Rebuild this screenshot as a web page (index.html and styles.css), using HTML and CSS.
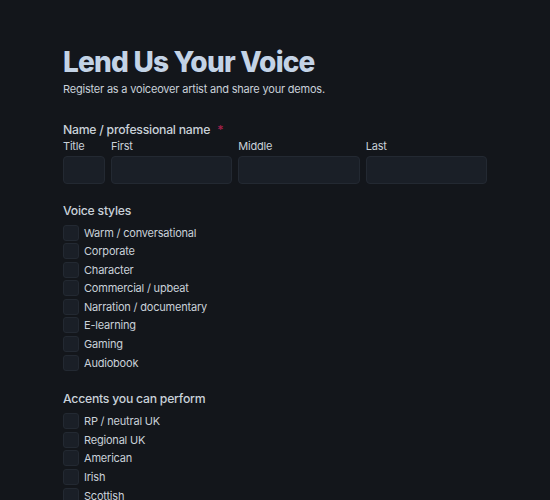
FILE: index.html
```html
<!DOCTYPE html>
<html lang="en">
<head>
<meta charset="utf-8">
<title>Lend Us Your Voice</title>
<link rel="stylesheet" href="styles.css">
</head>
<body>
<main class="page">
  <header class="head">
    <h1 class="title">Lend Us Your Voice</h1>
    <p class="subtitle">Register as a voiceover artist and share your demos.</p>
  </header>

  <section class="field">
    <div class="label">Name / professional name <span class="req">*</span></div>
    <div class="name-grid">
      <label class="sub">Title<input class="input" type="text"></label>
      <label class="sub">First<input class="input" type="text"></label>
      <label class="sub">Middle<input class="input" type="text"></label>
      <label class="sub">Last<input class="input" type="text"></label>
    </div>
  </section>

  <section class="field group">
    <div class="label">Voice styles</div>
    <div class="checks">
      <label class="check"><span class="box"></span>Warm / conversational</label>
      <label class="check"><span class="box"></span>Corporate</label>
      <label class="check"><span class="box"></span>Character</label>
      <label class="check"><span class="box"></span>Commercial / upbeat</label>
      <label class="check"><span class="box"></span>Narration / documentary</label>
      <label class="check"><span class="box"></span>E-learning</label>
      <label class="check"><span class="box"></span>Gaming</label>
      <label class="check"><span class="box"></span>Audiobook</label>
    </div>
  </section>

  <section class="field group group-2">
    <div class="label">Accents you can perform</div>
    <div class="checks checks-2">
      <label class="check"><span class="box"></span>RP / neutral UK</label>
      <label class="check"><span class="box"></span>Regional UK</label>
      <label class="check"><span class="box"></span>American</label>
      <label class="check"><span class="box"></span>Irish</label>
      <label class="check"><span class="box"></span>Scottish</label>
    </div>
  </section>
</main>
</body>
</html>
```

FILE: styles.css
```css
html, body {
  margin: 0;
  background: #13161b;
}
body {
  font-family: Inter, "Noto Sans", sans-serif;
  color: #c9d1d9;
  letter-spacing: -0.2px;
}
.page {
  box-sizing: border-box;
  width: 550px;
  padding: 45px 63px 0;
}
.title {
  margin: 0;
  font-size: 28px;
  line-height: 34px;
  font-weight: 800;
  color: #c3d3e6;
  letter-spacing: -0.8px;
}
.subtitle {
  margin: 2px 0 0;
  font-size: 11px;
  line-height: 16px;
  color: #c9d1d9;
}
.field {
  margin-top: 24px;
}
.group {
  margin-top: 18px;
}
.group-2 {
  margin-top: 19px;
}
.label {
  font-size: 12.25px;
  font-weight: 500;
  line-height: 18px;
  color: #c9d1d9;
  letter-spacing: -0.25px;
}
.req {
  color: #a3204b;
  margin-left: 4px;
}
.name-grid {
  display: grid;
  grid-template-columns: 42px 1fr 1fr 1fr;
  gap: 6px;
}
.sub {
  display: flex;
  flex-direction: column;
  gap: 3px;
  font-size: 11px;
  line-height: 14px;
  color: #c9d1d9;
}
.input {
  box-sizing: border-box;
  width: 100%;
  height: 28px;
  margin: 0;
  background: #1a1f27;
  border: 1px solid #232932;
  border-radius: 4px;
}
.checks {
  display: flex;
  flex-direction: column;
  gap: 2.6px;
  margin-top: 4.5px;
}
.checks-2 {
  margin-top: 5.5px;
}
.check {
  display: flex;
  align-items: center;
  gap: 5px;
  height: 16px;
  font-size: 11px;
  color: #c9d1d9;
}
.box {
  box-sizing: border-box;
  width: 16px;
  height: 16px;
  border-radius: 3px;
  background: #1a1f27;
  border: 1px solid #232932;
}
```
